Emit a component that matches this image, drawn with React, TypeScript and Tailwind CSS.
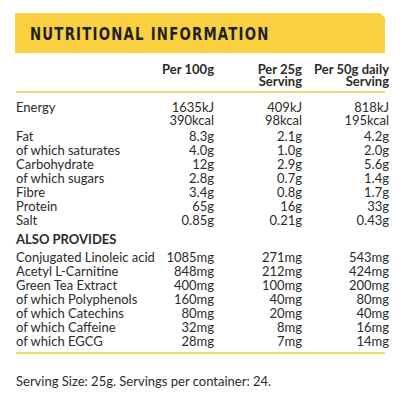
import React from "react"

const nutrients: [string, string, string, string][] = [
  ["Fat", "8.3g", "2.1g", "4.2g"],
  ["of which saturates", "4.0g", "1.0g", "2.0g"],
  ["Carbohydrate", "12g", "2.9g", "5.6g"],
  ["of which sugars", "2.8g", "0.7g", "1.4g"],
  ["Fibre", "3.4g", "0.8g", "1.7g"],
  ["Protein", "65g", "16g", "33g"],
  ["Salt", "0.85g", "0.21g", "0.43g"],
]

const extras: [string, string, string, string][] = [
  ["Conjugated Linoleic acid", "1085mg", "271mg", "543mg"],
  ["Acetyl L-Carnitine", "848mg", "212mg", "424mg"],
  ["Green Tea Extract", "400mg", "100mg", "200mg"],
  ["of which Polyphenols", "160mg", "40mg", "80mg"],
  ["of which Catechins", "80mg", "20mg", "40mg"],
  ["of which Caffeine", "32mg", "8mg", "16mg"],
  ["of which EGCG", "28mg", "7mg", "14mg"],
]

const cols = "grid grid-cols-[126px_72px_88px_87px]"

function cn(...c: string[]) {
  return c.join(" ")
}

function Row({ cells }: { cells: [string, string, string, string] }) {
  return (
    <div className={cn(cols, "h-[14px] items-center leading-[14px]")}>
      <span className="whitespace-nowrap">{cells[0]}</span>
      <span className="text-right">{cells[1]}</span>
      <span className="text-right">{cells[2]}</span>
      <span className="text-right">{cells[3]}</span>
    </div>
  )
}

export default function App() {
  return (
    <div className="w-[400px] h-[400px] bg-white pt-[13px] px-[15px] text-[#2b2b2b] font-['Lato','Liberation_Sans',sans-serif] text-[13px]">
      {/* Header band */}
      <div className="h-[40px] bg-[#f9d03f] flex items-center pl-[15px] [clip-path:polygon(0_0,calc(100%-5px)_0,100%_5px,100%_100%,0_100%)]">
        <h1 className="font-['DejaVu_Sans_Condensed',sans-serif] font-bold text-[18px] tracking-[1.5px] scale-x-[0.82] origin-left whitespace-nowrap text-[#1f1f1f] mt-[1px]">
          NUTRITIONAL INFORMATION
        </h1>
      </div>

      <div className="pl-[1px]">
        {/* Column headings */}
        <div className={cn(cols, "font-bold leading-[12px] pt-[10px] pb-[4px] border-b-2 border-[#f6d873]")}>
          <span />
          <span className="text-right whitespace-nowrap">Per 100g</span>
          <span className="text-right">
            Per 25g
            <br />
            Serving
          </span>
          <span className="text-right whitespace-nowrap">
            Per 50g daily
            <br />
            Serving
          </span>
        </div>

        {/* Energy */}
        <div className={cn(cols, "pt-[8px] leading-[13px]")}>
          <span>Energy</span>
          <span className="text-right">
            1635kJ
            <br />
            390kcal
          </span>
          <span className="text-right">
            409kJ
            <br />
            98kcal
          </span>
          <span className="text-right">
            818kJ
            <br />
            195kcal
          </span>
        </div>

        <div className="pt-[2px]">
          {nutrients.map((r) => (
            <Row key={r[0]} cells={r} />
          ))}
        </div>

        <div className="font-bold pt-[5px] pb-[4px] leading-[14px]">ALSO PROVIDES</div>

        <div className="pb-[4px] border-b-2 border-[#f6d873]">
          {extras.map((r) => (
            <Row key={r[0]} cells={r} />
          ))}
        </div>

        <p className="pt-[20px] leading-[14px]">Serving Size: 25g. Servings per container: 24.</p>
      </div>
    </div>
  )
}
